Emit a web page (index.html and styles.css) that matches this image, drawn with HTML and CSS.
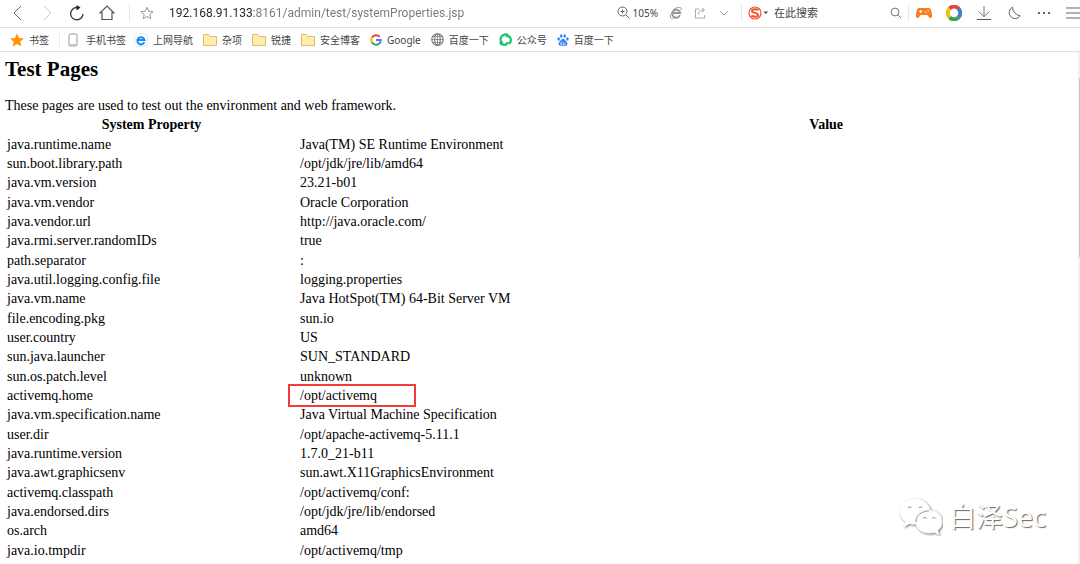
FILE: index.html
```html
<!DOCTYPE html>
<html lang="zh-CN">
<head>
<meta charset="utf-8">
<title>Test Pages</title>
<link rel="stylesheet" href="styles.css">
</head>
<body>
<header class="toolbar">
  <nav class="nav-buttons" aria-label="Navigation">
    <button class="tool" aria-label="Back"><svg width="16" height="16" viewBox="0 0 16 16"><path d="M12 1 5 8l7 7" stroke="#666"/></svg></button>
    <button class="tool" aria-label="Forward"><svg width="16" height="16" viewBox="0 0 16 16"><path d="m5 1 7 7-7 7" stroke="#ccc"/></svg></button>
    <button class="tool" aria-label="Reload"><svg width="16" height="16" viewBox="0 0 16 16"><path d="M8 2.500A6.200 6.200 0 1 0 14 9" stroke="#333" stroke-width="1.300"/><path d="m7.500 0 4 2.600-4 2.800z" fill="#222"/></svg></button>
    <button class="tool" aria-label="Home"><svg width="16" height="16" viewBox="0 0 16 16"><path d="M.5 8.500 8 1l7.500 7.500M3 7v7.500h10V7" stroke="#555" stroke-width="1.200"/></svg></button>
  </nav>
  <span class="divider"></span>
  <button class="tool" aria-label="Add bookmark"><svg width="14" height="14" viewBox="0 0 14 14"><path d="m7 1.200 1.700 4 4.400.4-3.300 2.900 1 4.200L7 10.500l-3.800 2.200 1-4.200L.9 5.600l4.400-.4z" stroke="#999"/></svg></button>
  <input class="address" type="text" aria-label="Address" value="192.168.91.133:8161/admin/test/systemProperties.jsp">
  <div class="page-tools">
    <button class="zoom"><svg width="13" height="13" viewBox="0 0 13 13"><circle cx="5.500" cy="5.500" r="4.500" stroke="#666"/><path d="m9 9 3.500 3.500M3.500 5.500h4M5.500 3.500v4" stroke="#666"/></svg>105%</button>
    <button class="small-tool" aria-label="Compatibility mode"><svg width="12" height="12" viewBox="0 0 12 12"><path d="M10 8.200A4 4 0 1 1 10.200 6H3" stroke="#999" stroke-width="1.900"/><path d="M3 2.800C6 .5 10-.3 11 1c.5.7.2 1.500-.3 2.300M2.200 5C.3 8 0 10.500 1 11.200c.7.500 2 .1 3.300-.7" stroke="#999"/></svg></button>
    <button class="small-tool" aria-label="Share"><svg width="12" height="12" viewBox="0 0 12 12"><path d="M5 2H1.500v9h9V8M4.500 7.500c0-3 2-4.500 5.500-4.500M8 .8 10.500 3 8 5.200" stroke="#aaa"/></svg></button>
    <button class="small-tool" aria-label="More page tools"><svg width="12" height="12" viewBox="0 0 12 12"><path d="m2 4 4 4 4-4" stroke="#999"/></svg></button>
  </div>
  <form class="search">
    <button class="engine" type="button" aria-label="Search engine"><svg width="20" height="14" viewBox="0 0 20 14"><circle cx="7" cy="7" r="6" stroke="#f4512c" stroke-width="1.200"/><path d="M10.500 4C8.500 2.800 4 2.900 4 5c0 2.400 6 1.400 6 3.900 0 2.200-4.500 2.200-6.600.8" stroke="#f4512c" stroke-width="2"/><path d="M15.500 5.500h4.500l-2.200 2.500z" fill="#444"/></svg></button>
    <input class="query" type="text" aria-label="在此搜索" placeholder="在此搜索">
    <button class="submit" aria-label="Search"><svg width="12" height="12" viewBox="0 0 12 12"><circle cx="5" cy="5" r="3.900" stroke="#777"/><path d="m8 8 3 3" stroke="#777"/></svg></button>
  </form>
  <span class="divider"></span>
  <div class="extensions">
    <button class="tool" aria-label="Games"><svg width="16" height="12" viewBox="0 0 16 12"><path d="M3 1h10c2 0 3 4 3 8 0 2.500-2.500 2.700-3.500.5C12 8.500 11.500 8 10.500 8h-5C4.500 8 4 8.500 3.500 9.500 2.500 11.700 0 11.500 0 9c0-4 1-8 3-8z" fill="#fb7d22"/><path d="M3.200 4.500h3M4.700 3v3M9 5.200h1.200M11.500 3.800h1.200" stroke="#fff" stroke-width="1.200"/></svg></button>
    <button class="tool" aria-label="Browser center"><svg width="16" height="16" viewBox="0 0 16 16" stroke-width="4"><path d="M3.400 3.700a6.100 6.100 0 0 1 9.200 0" stroke="#e14439"/><path d="M12.300 3.500a6.100 6.100 0 0 1 0 9" stroke="#4a7cc9"/><path d="M12.500 12.300a6.100 6.100 0 0 1-9 0" stroke="#35a456"/><path d="M3.700 12.500a6.100 6.100 0 0 1 0-9" stroke="#f5bc19"/></svg></button>
    <button class="tool" aria-label="Downloads"><svg width="14" height="14" viewBox="0 0 14 14"><path d="M7 0v10.500M1.500 5.500 7 10.700l5.500-5.200" stroke="#777"/><path d="M0 13.500h14" stroke="#555"/></svg></button>
    <button class="tool night" aria-label="Night mode"><svg width="16" height="16" viewBox="0 0 16 16"><path d="M6.500 2.200a9 9 0 0 0 7.700 8.600A6 6 0 1 1 6.500 2.200z" stroke="#666"/></svg></button>
    <button class="tool" aria-label="More"><svg width="14" height="4" viewBox="0 0 14 4"><path d="M1 1h2v2H1zM6 1h2v2H6zM11 1h2v2h-2z" fill="#666"/></svg></button>
    <button class="tool menu" aria-label="Menu"><svg width="14" height="12" viewBox="0 0 14 12"><path d="M0 1h14M0 6h14M0 11h14" stroke="#999" stroke-width="1.500"/></svg></button>
  </div>
</header>

<nav class="bookmarks" aria-label="书签">
  <a class="bookmark" href="#"><svg width="14" height="14" viewBox="0 0 14 14"><path d="m7 .5 2 4.600 5 .4-3.800 3.200 1.200 4.800L7 10.900l-4.400 2.600 1.200-4.800L0 5.500l5-.4z" fill="#ff9500"/></svg>书签</a>
  <span class="divider"></span>
  <a class="bookmark phone" href="#"><svg width="10" height="14" viewBox="0 0 10 14"><rect x="1" y="1" width="8" height="12" rx="1" stroke="#999"/><path d="M2 11.500h6" stroke="#bbb"/></svg>手机书签</a>
  <a class="bookmark" href="#"><svg width="14" height="14" viewBox="0 0 14 14"><rect x=".5" y=".5" width="13" height="13" rx="3" fill="#fff" stroke="#e4e9ee"/><path d="M10.300 9.200A3.600 3.600 0 1 1 10.500 7H4" stroke="#168cf5" stroke-width="2"/></svg>上网导航</a>
  <a class="bookmark" href="#"><svg width="14" height="14" viewBox="0 0 14 14"><path d="M.5 2.500V12.500h13V3.500H7L5.500 1.500h-5z" fill="#ffebaa" stroke="#dcbd70"/></svg>杂项</a>
  <a class="bookmark" href="#"><svg width="14" height="14" viewBox="0 0 14 14"><path d="M.5 2.500V12.500h13V3.500H7L5.500 1.500h-5z" fill="#ffebaa" stroke="#dcbd70"/></svg>锐捷</a>
  <a class="bookmark" href="#"><svg width="14" height="14" viewBox="0 0 14 14"><path d="M.5 2.500V12.500h13V3.500H7L5.500 1.500h-5z" fill="#ffebaa" stroke="#dcbd70"/></svg>安全博客</a>
  <a class="bookmark" href="#"><svg width="12" height="12" viewBox="0 0 12 12" stroke-width="2"><path d="M9.700 2.800A4.800 4.800 0 0 0 2 3.500" stroke="#ea4335"/><path d="M2 3.400a4.800 4.800 0 0 0 0 5" stroke="#fbbc05"/><path d="M1.900 8.300A4.800 4.800 0 0 0 9 9.700" stroke="#34a853"/><path d="M6 6h4.800A4.600 4.600 0 0 1 9 9.700" stroke="#4285f4"/></svg>Google</a>
  <a class="bookmark" href="#"><svg width="13" height="13" viewBox="0 0 12 12" stroke="#777"><circle cx="6" cy="6" r="5.300"/><ellipse cx="6" cy="6" rx="2.500" ry="5.300"/><path d="M.7 6h10.600M6 .7v10.600M1.500 3.300h9M1.500 8.700h9" stroke-width=".7"/></svg>百度一下</a>
  <a class="bookmark" href="#"><svg width="13" height="13" viewBox="0 0 12 12" stroke="#17c36a" stroke-width="2"><path d="M3.600 9.500A4 4 0 0 1 2.200 3.600C3.500 1.300 6.500.6 8.500 2.300"/><path d="M6.300 3.200c2.300-1 4.700.6 4.700 3.300 0 1.500-.7 2.700-1.800 3.400"/><path d="M1 8.300c1 3.300 6 3.800 7.300.2"/></svg>公众号</a>
  <a class="bookmark" href="#"><svg width="12" height="12" viewBox="0 0 12 12"><g fill="#3385ff"><ellipse cx="1.600" cy="5" rx="1.300" ry="1.700"/><ellipse cx="4.200" cy="2" rx="1.300" ry="1.800"/><ellipse cx="7.700" cy="2" rx="1.300" ry="1.800"/><ellipse cx="10.400" cy="5" rx="1.300" ry="1.700"/><path d="M6 4.800c1.600 0 2 1.600 3.300 2.700 2 1.600 1.200 4.300-.8 4.300h-5c-2 0-2.800-2.700-.8-4.300C4 6.400 4.400 4.800 6 4.800z"/></g><path d="M4.800 7.500v3H3.700V9h1M6.500 8.500v2H8v-2" stroke="#fff" stroke-width=".6"/></svg>百度一下</a>
</nav>

<main class="page">
  <h1 class="title">Test Pages</h1>
  <p class="intro">These pages are used to test out the environment and web framework.</p>
  <table class="properties">
    <thead><tr><th class="name-column">System Property</th><th>Value</th></tr></thead>
    <tbody>
      <tr><td>java.runtime.name</td><td>Java(TM) SE Runtime Environment</td></tr>
      <tr><td>sun.boot.library.path</td><td>/opt/jdk/jre/lib/amd64</td></tr>
      <tr><td>java.vm.version</td><td>23.21-b01</td></tr>
      <tr><td>java.vm.vendor</td><td>Oracle Corporation</td></tr>
      <tr><td>java.vendor.url</td><td>http://java.oracle.com/</td></tr>
      <tr><td>java.rmi.server.randomIDs</td><td>true</td></tr>
      <tr><td>path.separator</td><td>:</td></tr>
      <tr><td>java.util.logging.config.file</td><td>logging.properties</td></tr>
      <tr><td>java.vm.name</td><td>Java HotSpot(TM) 64-Bit Server VM</td></tr>
      <tr><td>file.encoding.pkg</td><td>sun.io</td></tr>
      <tr><td>user.country</td><td>US</td></tr>
      <tr><td>sun.java.launcher</td><td>SUN_STANDARD</td></tr>
      <tr><td>sun.os.patch.level</td><td>unknown</td></tr>
      <tr><td>activemq.home</td><td class="marked">/opt/activemq</td></tr>
      <tr><td>java.vm.specification.name</td><td>Java Virtual Machine Specification</td></tr>
      <tr><td>user.dir</td><td>/opt/apache-activemq-5.11.1</td></tr>
      <tr><td>java.runtime.version</td><td>1.7.0_21-b11</td></tr>
      <tr><td>java.awt.graphicsenv</td><td>sun.awt.X11GraphicsEnvironment</td></tr>
      <tr><td>activemq.classpath</td><td>/opt/activemq/conf:</td></tr>
      <tr><td>java.endorsed.dirs</td><td>/opt/jdk/jre/lib/endorsed</td></tr>
      <tr><td>os.arch</td><td>amd64</td></tr>
      <tr><td>java.io.tmpdir</td><td>/opt/activemq/tmp</td></tr>
    </tbody>
  </table>
  <div class="scroll-track"><div class="scroll-thumb"></div></div>
  <div class="watermark">
    <svg class="watermark-logo" width="44" height="38" viewBox="0 0 44 38"><g class="bubbles"><path d="M15.500 1C7 1 1 6.500 1 13.500c0 4 2 7.500 5.500 10L5 28.500l5.500-3c2 .6 4 .8 6.500.6 8-.6 14-6 14-12.600C31 6.500 24 1 15.500 1z"/></g><g class="bubbles"><path d="M30 12.500c-7.500 0-13 5-13 11.300S22.500 35 30 35c2 0 3.700-.3 5.200-.9l4.500 2.400-1.200-4c2.800-2.100 4.500-5.200 4.500-8.700 0-6.300-5.500-11.300-13-11.300z"/></g><path d="M9 10a2 2 0 0 1 3.500 0M20 10a2 2 0 0 1 3.500 0M24 20.500a2 2 0 0 1 3.500 0M33 20.500a2 2 0 0 1 3.500 0" stroke="#888"/><path d="M17 24c0-6 5-11 13-11" stroke="#999"/></svg>
    <span>白泽Sec</span>
  </div>
</main>
</body>
</html>
```

FILE: styles.css
```css
*, *::after { box-sizing: border-box; }

body {
  display: flex;
  flex-direction: column;
  height: 100vh;
  margin: 0;
  overflow: hidden;
  background: #fff;
  color: #000;
  font-family: "Noto Sans", "Noto Sans CJK SC", sans-serif;
}

button, input {
  padding: 0;
  border: 0;
  outline: 0;
  background: none;
  color: #444;
  font-family: inherit;
}

svg { display: block; flex: none; fill: none; }

.toolbar {
  display: flex;
  flex: none;
  align-items: center;
  height: 28px;
  padding: 0 0 2px 2px;
  border-bottom: 1px solid #e2e2e2;
}

.nav-buttons, .extensions, .page-tools, .search {
  display: flex;
  align-items: center;
}

.nav-buttons { margin-right: 7px; }

.tool {
  display: flex;
  justify-content: center;
  align-items: center;
  width: 30px;
  height: 20px;
}

.menu { width: 21px; justify-content: flex-end; }

.divider { flex: none; width: 1px; height: 18px; background: #e8e8e8; }

.divider + .tool { margin: 0 7px 0 2px; }

.address {
  flex: 1;
  min-width: 0;
  height: 20px;
  background: linear-gradient(90deg, #222 85px, #777 85px);
  background-clip: text;
  -webkit-text-fill-color: transparent;
  font-family: Roboto, "Noto Sans", sans-serif;
  font-size: 12px;
  line-height: 20px;
}

.page-tools { gap: 12px; margin-right: 11px; }

.zoom { display: flex; align-items: center; gap: 3px; font-size: 10px; line-height: 16px; }

.small-tool { width: 12px; height: 16px; display: flex; align-items: center; }

.search {
  width: 167px;
  height: 18px;
  padding: 0 6px;
  border-left: 1px solid #e8e8e8;
}

.query { flex: 1; min-width: 0; margin-left: 6px; font-size: 11px; line-height: 16px; }

.query::placeholder { color: #444; opacity: 1; }

.bookmarks {
  display: flex;
  flex: none;
  align-items: center;
  gap: 10px;
  height: 24px;
  padding: 0 10px;
  border-bottom: 1px solid #e2e2e2;
}

.bookmark {
  display: flex;
  align-items: center;
  gap: 5px;
  color: #444;
  font-size: 10px;
  line-height: 16px;
  text-decoration: none;
  white-space: nowrap;
}

.phone { gap: 8px; margin-right: -2px; }

.bookmarks .divider { height: 14px; margin-right: -2px; }

.page {
  position: relative;
  flex: 1;
  min-height: 0;
  padding: 5px 4px 0 5px;
  overflow: hidden;
  font-family: "Liberation Serif", serif;
  font-size: 14px;
  line-height: 19px;
}

.title { margin: 0 0 15px; font-size: 21px; line-height: 24px; }

.intro { margin: 0; }

.properties {
  width: 126%;
  table-layout: fixed;
  border-collapse: collapse;
}

.properties th, .properties td { height: 19px; padding: 0 2px; text-align: left; }

.properties th { text-align: center; }

.properties tbody tr:nth-child(3n + 1) td { height: 20px; }

.name-column { width: 293px; }

.properties .marked { position: relative; }

.marked::after {
  content: "";
  position: absolute;
  top: -2px;
  left: -10px;
  width: 128px;
  height: 23px;
  border: 2px solid #f23c3c;
}

.scroll-track {
  position: absolute;
  top: 0;
  right: 0;
  bottom: 0;
  width: 2px;
  background: #f0f0f0;
}

.scroll-thumb { height: 35%; margin: 26px 0 0 1px; background: #c8c8c8; }

.watermark {
  position: absolute;
  right: 34px;
  bottom: 28px;
  display: flex;
  align-items: center;
  gap: 6px;
  color: #fff;
  font-family: "Noto Sans", "Noto Sans CJK SC", sans-serif;
  font-size: 27px;
  line-height: 38px;
  text-shadow: 1px 1px 1px #666;
}

.bubbles { fill: #fff; stroke: #fff; filter: drop-shadow(1px 1px 1px #777); }
```
